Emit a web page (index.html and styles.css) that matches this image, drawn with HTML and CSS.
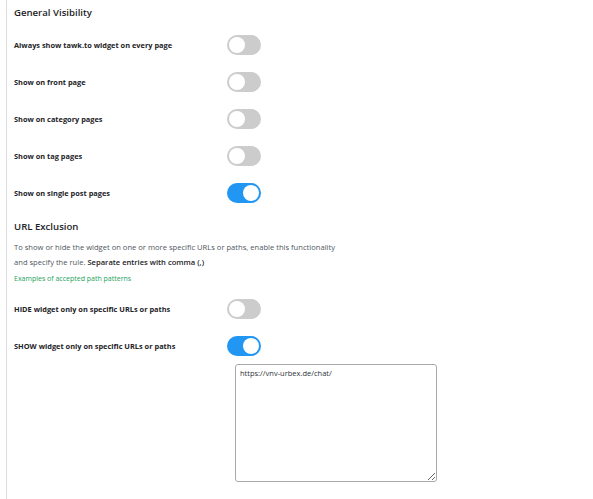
FILE: index.html
```html
<!DOCTYPE html>
<html>
<head>
<meta charset="utf-8">
<link rel="stylesheet" href="styles.css">
</head>
<body>
<div class="page">
  <h2 class="heading">General Visibility</h2>
  <div class="row"><span class="label">Always show tawk.to widget on every page</span><span class="toggle"></span></div>
  <div class="row"><span class="label">Show on front page</span><span class="toggle"></span></div>
  <div class="row"><span class="label">Show on category pages</span><span class="toggle"></span></div>
  <div class="row"><span class="label">Show on tag pages</span><span class="toggle"></span></div>
  <div class="row"><span class="label">Show on single post pages</span><span class="toggle on"></span></div>
  <h2 class="heading heading-url">URL Exclusion</h2>
  <p class="desc">To show or hide the widget on one or more specific URLs or paths, enable this functionality<br>and specify the rule. <span class="strong">Separate entries with comma (,)</span></p>
  <p class="link">Examples of accepted path patterns</p>
  <div class="row row-hide"><span class="label">HIDE widget only on specific URLs or paths</span><span class="toggle"></span></div>
  <div class="row"><span class="label">SHOW widget only on specific URLs or paths</span><span class="toggle on"></span></div>
  <div class="area-wrap"><textarea class="area">https://vnv-urbex.de/chat/</textarea></div>
</div>
</body>
</html>
```
FILE: styles.css
```css
html, body { margin: 0; padding: 0; background: #fff; }
body { font-family: "Open Sans", "Noto Sans", sans-serif; color: #23282d; }
.page {
  margin-left: 6px;
  border-left: 1px solid #dcdcdc;
  padding-left: 7px;
  min-height: 499px;
  box-sizing: border-box;
}
.heading {
  margin: 0;
  font-size: 9.6px;
  font-weight: 600;
  line-height: 26px;
  color: #1d2327;
}
.heading-url { margin-top: 5px; line-height: 22px; }
.row {
  display: grid;
  grid-template-columns: 213px 34px;
  align-items: center;
  height: 37px;
}
.row-hide { margin-top: 4px; }
.label { font-size: 7.4px; font-weight: 700; color: #1d2327; }
.toggle {
  position: relative;
  width: 34px;
  height: 20px;
  border-radius: 10px;
  background: #cccccc;
}
.toggle::after {
  content: "";
  position: absolute;
  left: 2px;
  top: 2px;
  width: 16px;
  height: 16px;
  border-radius: 50%;
  background: #fff;
}
.toggle.on { background: #2196f3; }
.toggle.on::after { left: 16px; }
.desc {
  margin: 2px 0 0;
  font-size: 7.6px;
  line-height: 15px;
  color: #50575e;
}
.strong { color: #1d2327; font-weight: 600; }
.link {
  margin: 1px 0 0;
  font-size: 7px;
  line-height: 15px;
  color: #1aa35a;
}
.area-wrap { padding-left: 221px; }
.area {
  display: block;
  width: 202px;
  height: 118px;
  box-sizing: border-box;
  margin: 0;
  padding: 3px 4px;
  border: 1px solid #a7aaad;
  border-radius: 3px;
  font-family: "Open Sans", "Noto Sans", sans-serif;
  font-size: 7.5px;
  color: #2c3338;
  resize: both;
}
```
